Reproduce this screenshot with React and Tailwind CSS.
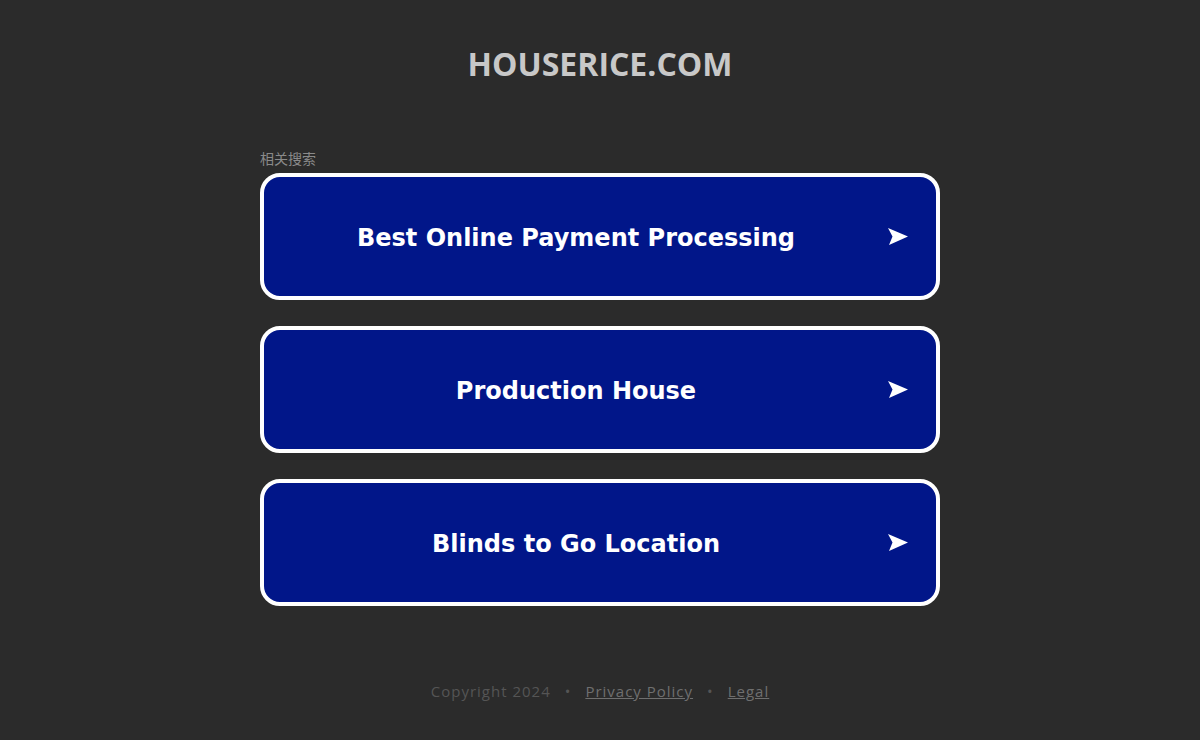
const searches = ['Best Online Payment Processing', 'Production House', 'Blinds to Go Location'];

function Arrow() {
  return (
    <svg width="20" height="18" viewBox="0 0 20 18" className="block">
      <path d="M0 0 L20 8.5 L1 17 L4.5 8.5 Z" fill="#fff" />
    </svg>
  );
}

export default function App() {
  return (
    <div className="min-h-[740px] bg-[#2b2b2b] flex flex-col items-center pt-[44px]" style={{ fontFamily: '"Open Sans", "Noto Sans", sans-serif' }}>
      <h1 className="text-[32px] leading-[40px] font-bold text-[#c8c8c8]">HOUSERICE.COM</h1>
      <div className="w-[680px] mt-[65px]">
        <div className="text-[14px] leading-[18px] text-[#8a8a8a] mb-[6px]" style={{ fontFamily: '"Noto Sans CJK SC", sans-serif' }}>相关搜索</div>
        <div className="flex flex-col gap-[26px]">
          {searches.map((s) => (
            <a key={s} href="#" className="flex items-center h-[127px] rounded-[20px] border-4 border-white bg-[#011689] pr-[28px]">
              <span className="flex-1 text-center text-white font-bold text-[24px] pt-[2px]" style={{ fontFamily: '"DejaVu Sans", Verdana, sans-serif' }}>{s}</span>
              <Arrow />
            </a>
          ))}
        </div>
      </div>
      <div className="mt-[75px] text-[15px] leading-[20px] tracking-[1px] text-[#555] flex items-center gap-[14px]">
        <span>Copyright 2024</span>
        <span>•</span>
        <a href="#" className="underline text-[#6f6f6f]">Privacy Policy</a>
        <span>•</span>
        <a href="#" className="underline text-[#6f6f6f]">Legal</a>
      </div>
    </div>
  );
}
